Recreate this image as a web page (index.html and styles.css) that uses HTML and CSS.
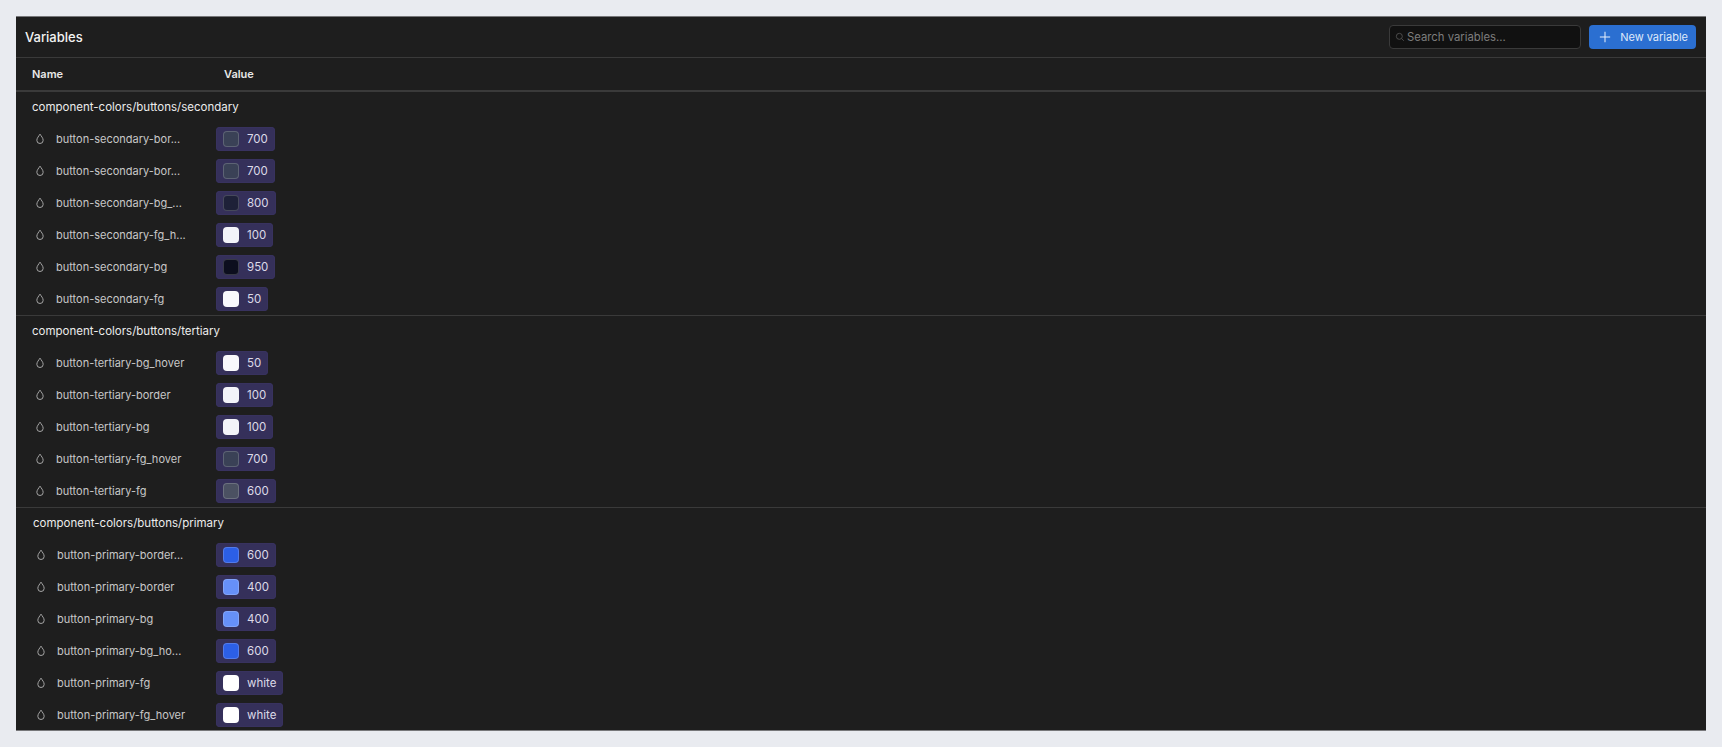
FILE: index.html
```html
<!DOCTYPE html>
<html lang="en">
<head>
    <meta charset="UTF-8">
    <title>Variables</title>
    <link rel="stylesheet" href="styles.css">
</head>
<body>
    <svg class="defs" width="0" height="0">
        <symbol id="drop" viewBox="0 0 12 14">
            <path d="M6 1.2C4.6 3.6 2.2 5.8 2.2 8.6a3.8 3.8 0 0 0 7.6 0C9.8 5.8 7.4 3.6 6 1.2z" fill="none" stroke="currentColor" stroke-width="1.2" stroke-linejoin="round"/>
        </symbol>
    </svg>
    <main class="panel">
        <header class="topbar">
            <h1>Variables</h1>
            <div class="actions">
                <label class="search">
                    <svg class="search-icon" viewBox="0 0 12 12"><circle cx="5.2" cy="5.2" r="3.6"/><path d="M8 8l2.6 2.6"/></svg>
                    <input type="text" placeholder="Search variables...">
                </label>
                <button class="new-btn">
                    <svg class="plus-icon" viewBox="0 0 14 14"><path d="M7 1v12M1 7h12"/></svg>
                    New variable
                </button>
            </div>
        </header>
        <div class="columns">
            <span class="col-name">Name</span>
            <span>Value</span>
        </div>

        <section class="group">
            <h2>component-colors/buttons/secondary</h2>
            <div class="row"><svg class="drop"><use href="#drop"/></svg><span class="name">button-secondary-bor...</span><span class="chip"><i class="swatch gray-700"></i>700</span></div>
            <div class="row"><svg class="drop"><use href="#drop"/></svg><span class="name">button-secondary-bor...</span><span class="chip"><i class="swatch gray-700"></i>700</span></div>
            <div class="row"><svg class="drop"><use href="#drop"/></svg><span class="name">button-secondary-bg_...</span><span class="chip"><i class="swatch gray-800"></i>800</span></div>
            <div class="row"><svg class="drop"><use href="#drop"/></svg><span class="name">button-secondary-fg_h...</span><span class="chip"><i class="swatch gray-100"></i>100</span></div>
            <div class="row"><svg class="drop"><use href="#drop"/></svg><span class="name">button-secondary-bg</span><span class="chip"><i class="swatch gray-950"></i>950</span></div>
            <div class="row"><svg class="drop"><use href="#drop"/></svg><span class="name">button-secondary-fg</span><span class="chip"><i class="swatch gray-50"></i>50</span></div>
        </section>

        <section class="group">
            <h2>component-colors/buttons/tertiary</h2>
            <div class="row"><svg class="drop"><use href="#drop"/></svg><span class="name">button-tertiary-bg_hover</span><span class="chip"><i class="swatch gray-50"></i>50</span></div>
            <div class="row"><svg class="drop"><use href="#drop"/></svg><span class="name">button-tertiary-border</span><span class="chip"><i class="swatch gray-100"></i>100</span></div>
            <div class="row"><svg class="drop"><use href="#drop"/></svg><span class="name">button-tertiary-bg</span><span class="chip"><i class="swatch gray-100"></i>100</span></div>
            <div class="row"><svg class="drop"><use href="#drop"/></svg><span class="name">button-tertiary-fg_hover</span><span class="chip"><i class="swatch gray-700"></i>700</span></div>
            <div class="row"><svg class="drop"><use href="#drop"/></svg><span class="name">button-tertiary-fg</span><span class="chip"><i class="swatch gray-600"></i>600</span></div>
        </section>

        <section class="group group-primary">
            <h2>component-colors/buttons/primary</h2>
            <div class="row"><svg class="drop"><use href="#drop"/></svg><span class="name">button-primary-border...</span><span class="chip"><i class="swatch blue-600"></i>600</span></div>
            <div class="row"><svg class="drop"><use href="#drop"/></svg><span class="name">button-primary-border</span><span class="chip"><i class="swatch blue-400"></i>400</span></div>
            <div class="row"><svg class="drop"><use href="#drop"/></svg><span class="name">button-primary-bg</span><span class="chip"><i class="swatch blue-400"></i>400</span></div>
            <div class="row"><svg class="drop"><use href="#drop"/></svg><span class="name">button-primary-bg_ho...</span><span class="chip"><i class="swatch blue-600"></i>600</span></div>
            <div class="row"><svg class="drop"><use href="#drop"/></svg><span class="name">button-primary-fg</span><span class="chip"><i class="swatch white"></i>white</span></div>
            <div class="row"><svg class="drop"><use href="#drop"/></svg><span class="name">button-primary-fg_hover</span><span class="chip"><i class="swatch white"></i>white</span></div>
        </section>
    </main>
</body>
</html>
```

FILE: styles.css
```css
* {
    box-sizing: border-box;
}
html, body {
    height: 747px;
    overflow: hidden;
}
body {
    margin: 0;
    padding: 16px;
    background-color: #e9ebf0;
    font-family: Inter, "Liberation Sans", sans-serif;
    font-size: 11px;
    color: #d6d6d6;
}
.defs {
    position: absolute;
}
.panel {
    height: 715px;
    width: 1690px;
    overflow: hidden;
    background-color: #1e1e1e;
    border-top: 1px solid #77777a;
    border-bottom: 1px solid #77777a;
}
.topbar {
    height: 41px;
    padding: 0 10px 0 9px;
    display: flex;
    align-items: center;
    justify-content: space-between;
    border-bottom: 1px solid #3a3a3a;
}
h1 {
    margin: 0;
    font-size: 13px;
    font-weight: 500;
    color: #f2f2f2;
}
.actions {
    display: flex;
    gap: 8px;
}
.search {
    width: 192px;
    height: 24px;
    padding: 0 5px;
    display: flex;
    align-items: center;
    gap: 2px;
    background-color: #111111;
    border: 1px solid #3a3a3a;
    border-radius: 4px;
}
.search-icon {
    width: 10px;
    height: 10px;
    fill: none;
    stroke: #555555;
    stroke-width: 1;
}
.search input {
    flex: 1;
    min-width: 0;
    padding: 0;
    border: none;
    outline: none;
    background: transparent;
    font: inherit;
    font-size: 11.3px;
    color: #d6d6d6;
}
.search input::placeholder {
    color: #7d7d7d;
    opacity: 1;
}
.new-btn {
    width: 107px;
    height: 24px;
    padding: 0 8px 0 10px;
    display: flex;
    align-items: center;
    justify-content: space-between;
    border: none;
    border-radius: 4px;
    background-color: #2b6fd1;
    color: #dfe9fa;
    font: inherit;
    font-size: 11px;
}
.plus-icon {
    width: 12px;
    height: 12px;
    fill: none;
    stroke: #e8f0fc;
    stroke-width: 1.2;
}
.columns {
    height: 34px;
    margin-bottom: -1px;
    padding-left: 16px;
    display: flex;
    align-items: center;
    border-bottom: 2px solid #3a3a3a;
    font-weight: 600;
    color: #e8e8e8;
}
.col-name {
    width: 192px;
}
.group {
    margin-bottom: -1px;
    border-bottom: 1px solid #3a3a3a;
}
.group-primary {
    padding-left: 1px;
    border-bottom: none;
}
h2 {
    margin: 0;
    height: 32px;
    padding-left: 16px;
    display: flex;
    align-items: center;
    font-size: 11.5px;
    font-weight: 400;
    color: #ececec;
}
.row {
    height: 32px;
    padding-left: 19px;
    display: flex;
    align-items: center;
    color: #c8c8c8;
}
.drop {
    width: 10px;
    height: 12px;
    margin-right: 11px;
    color: #a5a5a5;
}
.name {
    width: 160px;
    white-space: nowrap;
}
.group-primary .name {
    width: 159px;
}
.chip {
    height: 24px;
    padding: 0 7px 0 7px;
    display: flex;
    align-items: center;
    gap: 8px;
    background-color: #35305a;
    border-radius: 4px;
    box-shadow: inset 0 0 0 1px #38325f;
    font-size: 11.5px;
    color: #dcdae8;
}
.swatch {
    width: 16px;
    height: 16px;
    border-radius: 4px;
    border: 1px solid rgba(255, 255, 255, 0.18);
}
.gray-600 { background-color: #4b5162; }
.gray-700 { background-color: #3a4156; }
.gray-800 { background-color: #1e2138; }
.gray-950 { background-color: #0c0e1e; }
.gray-100 { background-color: #f2f3f8; }
.gray-50 { background-color: #f9f9fc; }
.blue-600 { background-color: #2c5fe6; }
.blue-400 { background-color: #6690f8; }
.white { background-color: #ffffff; }
```
